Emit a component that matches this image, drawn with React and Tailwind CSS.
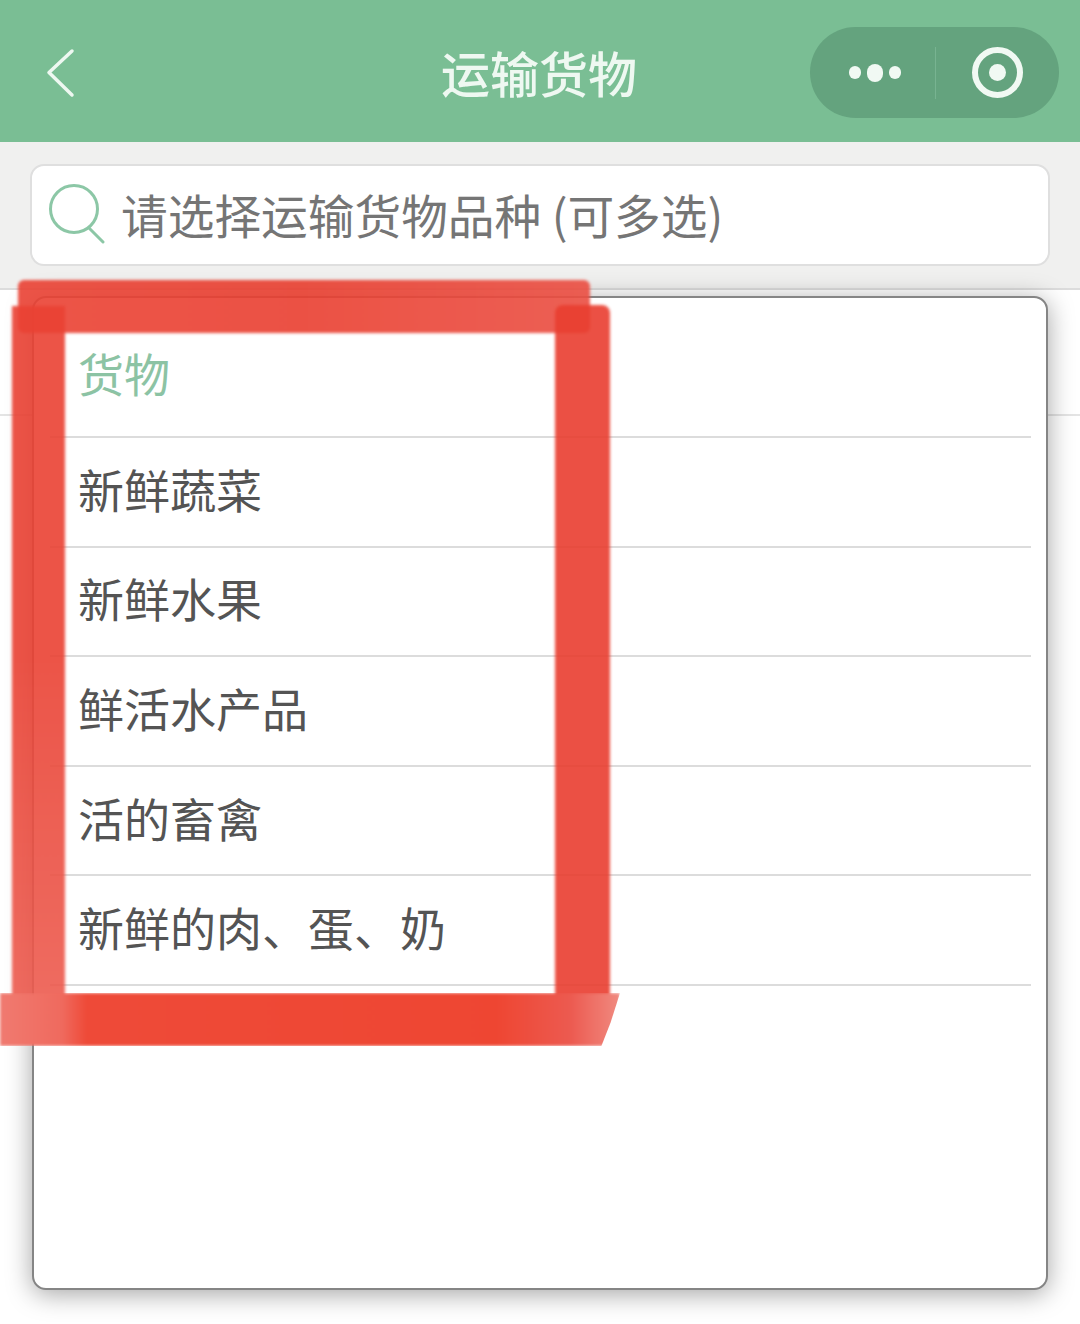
const CARGO_ITEMS = ["新鲜蔬菜", "新鲜水果", "鲜活水产品", "活的畜禽", "新鲜的肉、蛋、奶"];

function Header() {
  return (
    <div className="h-[142px] bg-[#7abe94] flex items-center justify-between pl-[46px] pr-[21px] relative">
      <svg width="30" height="50" viewBox="0 0 30 50" fill="none" className="mt-[4px]">
        <path d="M26 3 L3 24.5 L26 47" stroke="#eef8f1" strokeWidth="3.5" strokeLinecap="round" strokeLinejoin="round" />
      </svg>
      <h1 className="absolute left-[441px] top-[42px] text-[49px] leading-[60px] font-medium text-[#eef8f1]">运输货物</h1>
      <div className="w-[249px] h-[91px] rounded-full bg-[#64a37e] flex items-center mt-[3px]">
        <div className="w-[125px] flex items-center justify-center gap-[6px] pl-[4px]">
          <span className="w-[12px] h-[13px] rounded-full bg-[#f1f9f3]" />
          <span className="w-[16px] h-[18px] rounded-full bg-[#f1f9f3]" />
          <span className="w-[12px] h-[13px] rounded-full bg-[#f1f9f3]" />
        </div>
        <div className="w-px h-[52px] bg-[#78b391]" />
        <div className="flex-1 flex items-center justify-center">
          <div className="w-[51px] h-[51px] rounded-full border-[6px] border-[#f1f9f3] flex items-center justify-center">
            <span className="w-[17px] h-[17px] rounded-full bg-[#f1f9f3]" />
          </div>
        </div>
      </div>
    </div>
  );
}

function SearchBar() {
  return (
    <div className="h-[148px] bg-[#f0f0ef] border-b-2 border-[#dcdcdc] pt-[22px] px-[30px]">
      <div className="h-[102px] bg-white rounded-[14px] border-2 border-[#dfdfdf] flex items-center pl-[15px]">
        <svg width="60" height="60" viewBox="0 0 60 60" fill="none" className="shrink-0 -mt-[3px]">
          <circle cx="27" cy="25" r="23.5" stroke="#8cc7a6" strokeWidth="3" />
          <path d="M42 44 L56 58" stroke="#8cc7a6" strokeWidth="3" strokeLinecap="round" />
        </svg>
        <span className="ml-[14px] -mt-[3px] text-[46.7px] leading-[60px] text-[#757575] whitespace-nowrap">请选择运输货物品种 (可多选)</span>
      </div>
    </div>
  );
}

function CargoModal() {
  return (
    <div className="absolute left-[32px] top-[296px] w-[1016px] h-[994px] bg-white rounded-[14px] border-2 border-[#858585] shadow-[0_4px_26px_rgba(0,0,0,0.36)] pl-[16px]">
      <div className="w-[981px]">
        <div className="h-[140px] border-b-2 border-[#dcdcdc] pl-[28px] pt-[44px] text-[46px] leading-[60px] text-[#8cc3a4]">货物</div>
        {CARGO_ITEMS.map((item) => (
          <div key={item} className="h-[109.6px] border-b-2 border-[#dcdcdc] flex items-center pl-[28px] pb-[8px] text-[46px] leading-[60px] text-[#545454]">
            {item}
          </div>
        ))}
      </div>
    </div>
  );
}

// red marker frame someone painted over the screenshot
function MarkerFrame() {
  return (
    <div className="absolute inset-0 pointer-events-none">
      <div className="absolute left-[18px] top-[280px] w-[572px] h-[53px] rounded-[6px] blur-[1.5px] opacity-90 bg-linear-to-r from-[#ea4234] via-[#e93f30] to-[#eb4e42]" />
      <div className="absolute left-[12px] top-[306px] w-[53px] h-[706px] rounded-b-[8px] blur-[1.5px] opacity-90 bg-linear-to-b from-[#ea4234] via-[#ea4234] to-[#ed5c50]" />
      <div className="absolute left-[555px] top-[305px] w-[55px] h-[715px] rounded-[8px] blur-[1.5px] opacity-90 bg-[#e93e30]" />
      <div className="absolute left-0 top-[993px] w-[620px] h-[53px] blur-[1.5px] bg-[linear-gradient(90deg,#f07a70_0%,#ef6a5e_10%,#ee4a38_14%,#ee4632_80%,#ec5a50_92%,#f08a80_100%)] [clip-path:polygon(0_0,100%_0,98.5%_55%,97%_100%,0_100%)]" />
    </div>
  );
}

export default function App() {
  return (
    <div className="relative w-[1080px] h-[1324px] bg-white overflow-hidden font-['Noto_Sans_CJK_SC','Noto_Sans',sans-serif]">
      <Header />
      <SearchBar />
      <div className="h-[126px] border-b-2 border-[#e4e4e4]" />
      <CargoModal />
      <MarkerFrame />
    </div>
  );
}
